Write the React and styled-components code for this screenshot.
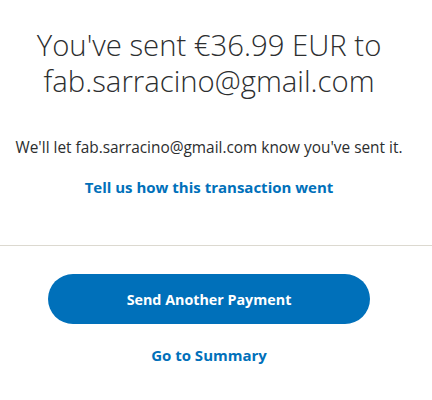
import React from "react";
import styled, { createGlobalStyle } from "styled-components";

const Global = createGlobalStyle`
  html, body { margin: 0; padding: 0; background: #fff; }
  body { font-family: "Open Sans", "Noto Sans", sans-serif; color: #2c2e2f; }
`;

const Page = styled.main`
  width: 418px;
  display: flex;
  flex-direction: column;
  align-items: stretch;
  padding-top: 27px;
`;

const Section = styled.section`
  display: flex;
  flex-direction: column;
  align-items: center;
`;

const Heading = styled.h1`
  margin: 0;
  font-size: 29.3px;
  font-weight: 300;
  line-height: 36px;
  text-align: center;
  color: #2c2e2f;
`;

const Message = styled.p`
  margin: 39px 0 0;
  font-size: 15.4px;
  line-height: 20px;
  text-align: center;
  color: #2c2e2f;
  white-space: nowrap;
`;

const TextLink = styled.a`
  display: block;
  margin-top: ${(p) => p.$top || 0}px;
  font-size: 15px;
  font-weight: 700;
  line-height: 20px;
  color: #0070ba;
  text-decoration: none;
  text-align: center;
  cursor: pointer;
`;

const Divider = styled.hr`
  width: 432px;
  margin: 48px 0 0;
  border: 0;
  border-top: 1px solid #dcd9d0;
`;

const Actions = styled.div`
  display: flex;
  flex-direction: column;
  align-items: center;
  padding-top: 28px;
`;

const PrimaryButton = styled.button`
  width: 322px;
  height: 50px;
  border: 0;
  border-radius: 25px;
  background: #0070ba;
  color: #fff;
  font-family: inherit;
  font-size: 14.3px;
  font-weight: 700;
  cursor: pointer;
`;

export default function App() {
  return (
    <>
      <Global />
      <Page>
        <Section>
          <Heading>
            You've sent €36.99 EUR to
            <br />
            fab.sarracino@gmail.com
          </Heading>
          <Message>We'll let fab.sarracino@gmail.com know you've sent it.</Message>
          <TextLink $top={19}>Tell us how this transaction went</TextLink>
        </Section>
        <Divider />
        <Actions>
          <PrimaryButton>Send Another Payment</PrimaryButton>
          <TextLink $top={21}>Go to Summary</TextLink>
        </Actions>
      </Page>
    </>
  );
}
